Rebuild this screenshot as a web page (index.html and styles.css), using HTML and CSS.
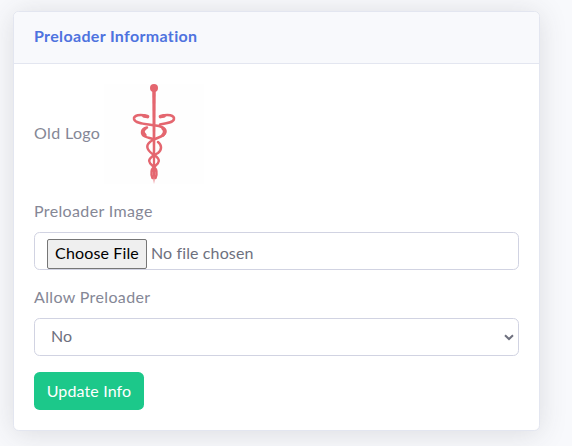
FILE: index.html
```html
<!DOCTYPE html>
<html lang="en">
<head>
<meta charset="utf-8">
<title>Preloader Information</title>
<link rel="stylesheet" href="styles.css">
</head>
<body>
<section class="card">
  <header class="card-header"><h6 class="title">Preloader Information</h6></header>
  <form class="card-body">
    <div class="logo-row">
      <span class="label old-logo">Old Logo</span>
      <svg class="logo" width="100" height="104" viewBox="0 0 100 104" fill="none" stroke="#e4666f" stroke-linecap="round">
        <rect x="0" y="2" width="100" height="100" fill="#fefefe" stroke="none"/>
        <path d="M48.200 6 H51.800 L51 94 L50 102 L49 94 Z" fill="#e4666f" stroke="none"/>
        <circle cx="50" cy="6" r="4" fill="#e4666f" stroke="none"/>
        <path d="M43 34.300 C36 31.500 29.500 33.500 30 37 C31 42 43 42 50 43.300 C57 44 62 46 61.500 50 C61 54 55 55 50 57.500 C45 60 43 62 43.300 65 C43.600 69 47 71 50 73 C53 75 55 76 54.800 79 C54.500 82 52 83 50 85 C47 88 46.500 91 48.500 96" stroke-width="2.500"/>
        <path d="M57 34.300 C64 31.500 70.500 33.500 70 37 C69.500 40.500 62 41.500 56 42.500 M43 45.500 C37 47 36.500 52 41 54.500 C44 56 47 56 50 57.500 M54 60 C58 63 58 68 54 71 C51 73 45 75 45.200 79 C45.500 82 48 83 50 85 C53 88 53.500 91 51.500 96" stroke-width="2.500"/>
        <path d="M40 33.900 L43.500 34.500 M60 33.900 L56.500 34.500" stroke-width="3.800"/>
        <path d="M41 46.800 C38.500 48 38.500 51 41 53 M59 46.500 C61 48 61 51 59 53" stroke-width="3.400"/>
      </svg>
    </div>
    <label class="label image-label" for="image">Preloader Image</label>
    <input class="control file" id="image" type="file">
    <label class="label allow-label" for="allow">Allow Preloader</label>
    <div class="select-wrap">
      <select class="control select" id="allow"><option>No</option><option>Yes</option></select>
      <svg class="chevron" width="10" height="7" viewBox="0 0 10 7"><path d="M1 1.200 L5 5 L9 1.200" fill="none" stroke="#6e707e" stroke-width="2"/></svg>
    </div>
    <button class="submit" type="button">Update Info</button>
  </form>
</section>
</body>
</html>
```
FILE: styles.css
```css
* { box-sizing: border-box; }
body {
  margin: 0;
  padding: 11px 32px 15px 13px;
  height: 446px;
  overflow: hidden;
  background: #f8f9fc;
  font: 16px/24px Lato, "Open Sans", sans-serif;
  font-variant-ligatures: none;
  color: #858796;
}
.card {
  height: 420px;
  background: #fff;
  border: 1px solid #e3e6f0;
  border-radius: 5.6px;
  box-shadow: 0 2.4px 28px rgba(58, 59, 69, .15);
}
.card-header {
  height: 52px;
  padding: 12px 20px;
  background: #f8f9fc;
  border-bottom: 1px solid #e3e6f0;
  border-radius: 5px 5px 0 0;
}
.title {
  margin: 0;
  font-size: 16px;
  font-weight: 700;
  line-height: 24px;
  letter-spacing: .34px;
  color: #4e73df;
}
.card-body { padding: 18px 20px; display: flex; flex-direction: column; align-items: flex-start; }
.logo-row { display: flex; align-items: center; height: 104px; }
.label { display: block; white-space: nowrap; letter-spacing: .36px; }
.old-logo { width: 70px; padding-bottom: 3px; }
.image-label { margin-top: 13px; }
.allow-label { margin-top: 15px; }
.control {
  display: block;
  width: 485px;
  height: 38px;
  margin-top: 9px;
  border: 1px solid #d1d3e2;
  border-radius: 5.6px;
  background: #fff;
  font: inherit;
  font-variant-ligatures: none;
  color: #6e707e;
}
.file { padding: 6px 12px; overflow: hidden; letter-spacing: .12px; }
.file::file-selector-button {
  width: 100px;
  height: 30px;
  margin: 0 4px 0 0;
  padding: 0 7px 2px;
  border: 1px solid #767676;
  border-radius: 2px;
  background: #efefef;
  color: #000;
  font: inherit;
  letter-spacing: .14px;
}
.select-wrap { position: relative; }
.select { appearance: none; padding: 5px 16px 7px; }
.chevron { position: absolute; right: 5px; bottom: 15px; }
.submit {
  width: 110px;
  height: 38px;
  margin-top: 16px;
  padding: 0 0 1px;
  border: 0;
  border-radius: 5.6px;
  background: #1cc88a;
  font: inherit;
  letter-spacing: .14px;
  color: #fff;
}
```
